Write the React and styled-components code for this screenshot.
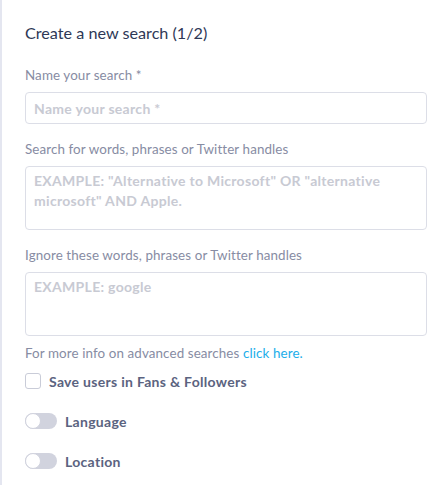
import React from "react";
import styled, { createGlobalStyle } from "styled-components";

const GlobalStyle = createGlobalStyle`
  body {
    margin: 0;
    background: #fff;
    font-family: Lato, "Open Sans", sans-serif;
  }
  * { box-sizing: border-box; }
`;

function Toggle({ label }) {
  return (
    <ToggleRow>
      <Track>
        <Knob />
      </Track>
      <OptionLabel>{label}</OptionLabel>
    </ToggleRow>
  );
}

export default function App() {
  return (
    <Panel>
      <GlobalStyle />
      <Title>Create a new search (1/2)</Title>

      <Field>
        <Label>Name your search *</Label>
        <Input placeholder="Name your search *" />
      </Field>

      <Field>
        <Label>Search for words, phrases or Twitter handles</Label>
        <TextArea placeholder={'EXAMPLE: "Alternative to Microsoft" OR "alternative microsoft" AND Apple.'} />
      </Field>

      <Field>
        <Label>Ignore these words, phrases or Twitter handles</Label>
        <TextArea placeholder="EXAMPLE: google" />
      </Field>

      <Info>
        For more info on advanced searches <Link href="#">click here.</Link>
      </Info>

      <CheckRow>
        <Box />
        <OptionLabel>Save users in Fans &amp; Followers</OptionLabel>
      </CheckRow>

      <Toggle label="Language" />
      <Toggle label="Location" />
    </Panel>
  );
}

const Panel = styled.div`
  min-height: 485px;
  border-left: 2px solid #e4e6f0;
  padding: 23px 12px 0 23px;
  display: flex;
  flex-direction: column;
`;

const Title = styled.h2`
  margin: 0 0 24px;
  font-size: 16.2px;
  line-height: 20px;
  font-weight: 400;
  color: #2e3856;
`;

const Field = styled.div`
  display: flex;
  flex-direction: column;
  gap: 9px;
  margin-bottom: 17px;
`;

const Label = styled.label`
  font-size: 13.4px;
  letter-spacing: 0.1px;
  line-height: 16px;
  color: #878ca3;
`;

const inputBase = `
  width: 100%;
  border: 1px solid #dcdee7;
  border-radius: 4px;
  background: #fff;
  font-family: Lato, "Open Sans", sans-serif;
  font-size: 14px;
  letter-spacing: 0.3px;
  font-weight: 700;
  color: #2e3856;
  outline: none;
  &::placeholder {
    color: #c8cad3;
  }
`;

const Input = styled.input`
  ${inputBase}
  height: 32px;
  padding: 0 8px;
`;

const TextArea = styled.textarea`
  ${inputBase}
  height: 64px;
  padding: 4px 8px;
  line-height: 20px;
  resize: none;
`;

const Info = styled.p`
  margin: -8px 0 12px;
  font-size: 13.4px;
  letter-spacing: 0.1px;
  line-height: 16px;
  color: #878ca3;
`;

const Link = styled.a`
  color: #22aeea;
  text-decoration: none;
`;

const CheckRow = styled.div`
  display: flex;
  align-items: center;
  gap: 8px;
  height: 16px;
  margin-bottom: 24px;
`;

const Box = styled.span`
  width: 16px;
  height: 16px;
  border: 1px solid #c9ccd8;
  border-radius: 3px;
  background: #fff;
`;

const OptionLabel = styled.span`
  font-size: 14px;
  letter-spacing: 0.3px;
  font-weight: 700;
  color: #5b6380;
`;

const ToggleRow = styled.div`
  display: flex;
  align-items: center;
  gap: 8px;
  height: 16px;
  margin-bottom: 24px;
`;

const Track = styled.span`
  position: relative;
  width: 32px;
  height: 16px;
  border-radius: 8px;
  background: #d1d3de;
`;

const Knob = styled.span`
  position: absolute;
  left: 0;
  top: 0;
  width: 16px;
  height: 16px;
  border-radius: 50%;
  background: #fff;
  border: 1px solid #d1d3de;
`;
